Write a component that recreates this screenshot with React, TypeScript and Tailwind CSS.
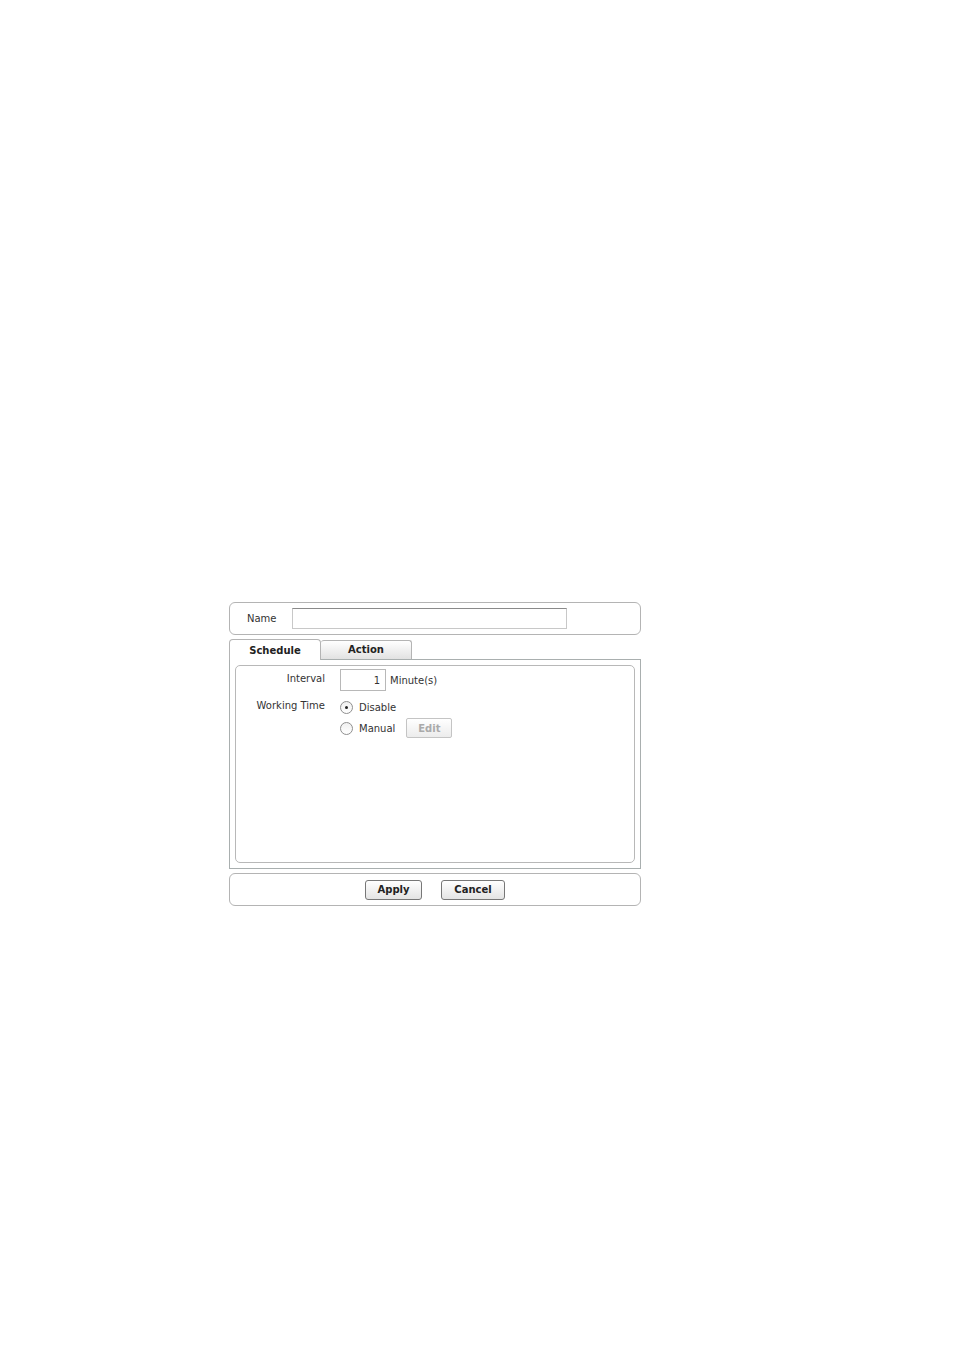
import React from "react";

const font = { fontFamily: '"DejaVu Sans", Verdana, sans-serif' };

function Radio({ checked }: { checked?: boolean }) {
  return (
    <span className="flex h-[13px] w-[13px] items-center justify-center rounded-full border border-[#8f8f8f] bg-gradient-to-b from-[#f0f0f0] to-white">
      {checked && <span className="h-[3px] w-[3px] rounded-full bg-[#222]" />}
    </span>
  );
}

function Button({ children, className = "" }: { children: React.ReactNode; className?: string }) {
  return (
    <button
      className={
        "flex h-[20px] items-center justify-center rounded-[3px] border border-[#777] bg-gradient-to-b from-white to-[#e4e4e4] text-[10px] font-bold text-[#222] " +
        className
      }
    >
      {children}
    </button>
  );
}

export default function App() {
  return (
    <div className="min-h-[1350px] bg-white pl-[229px] pt-[602px] text-[#333]" style={font}>
      <div className="flex w-[412px] flex-col">
        {/* name */}
        <div className="flex h-[33px] items-center rounded-[6px] border border-[#b4b4b4] pl-[17px]">
          <span className="w-[45px] text-[10px] text-[#333]">Name</span>
          <div className="h-[21px] w-[275px] border border-[#c8c8c8] border-t-[#8a8a8a] bg-white" />
        </div>

        {/* tabs */}
        <div className="mt-[4px] flex items-end">
          <div className="relative z-10 -mb-px flex h-[21px] w-[92px] items-center justify-center rounded-t-[4px] border border-b-0 border-[#b4b4b4] bg-white text-[10px] font-bold text-[#222]">
            Schedule
          </div>
          <div className="flex h-[19px] w-[91px] items-center justify-center rounded-t-[3px] border border-b-0 border-l-0 border-[#b4b4b4] bg-gradient-to-b from-white to-[#e2e2e2] pb-[1px] text-[10px] font-bold text-[#222]">
            Action
          </div>
        </div>
        <div className="h-[210px] border border-[#a9afaf] p-[5px]">
          <div className="h-full rounded-[5px] border border-[#b8b8b8] pt-[3px]">
            <div className="flex items-center">
              <span className="w-[89px] pb-[4px] text-right text-[10px]">Interval</span>
              <div className="ml-[15px] flex h-[22px] w-[46px] items-center justify-end border border-[#b8b8b8] pr-[5px] text-[10px]">
                1
              </div>
              <span className="ml-[4px] text-[10px]">Minute(s)</span>
            </div>
            <div className="mt-[5px] flex">
              <span className="mt-[2px] w-[89px] text-right text-[10px]">Working Time</span>
              <div className="ml-[15px] flex flex-col">
                <div className="mt-[4px] flex items-center gap-[6px]">
                  <Radio checked />
                  <span className="text-[10px]">Disable</span>
                </div>
                <div className="mt-[3px] flex items-center">
                  <Radio />
                  <span className="ml-[6px] text-[10px]">Manual</span>
                  <span className="ml-[11px] flex h-[20px] w-[46px] items-center justify-center rounded-[2px] border border-[#c4c4c4] bg-gradient-to-b from-white to-[#ececec] text-[10px] font-bold text-[#aaa]">
                    Edit
                  </span>
                </div>
              </div>
            </div>
          </div>
        </div>

        {/* actions */}
        <div className="mt-[4px] flex h-[33px] items-center justify-center gap-[19px] rounded-[6px] border border-[#b4b4b4]">
          <Button className="w-[57px]">Apply</Button>
          <Button className="w-[64px]">Cancel</Button>
        </div>
      </div>
    </div>
  );
}
